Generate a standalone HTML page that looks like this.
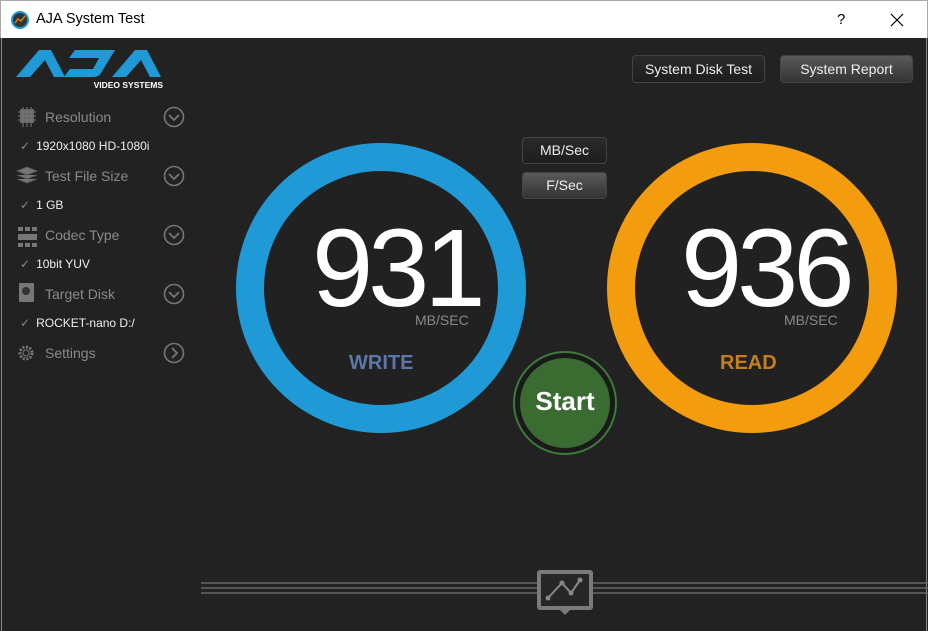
<!DOCTYPE html>
<html><head><meta charset="utf-8"><style>
*{margin:0;padding:0;box-sizing:border-box}
body{width:928px;height:631px;overflow:hidden;background:#222;font-family:"Liberation Sans",sans-serif;position:relative}
.tb{position:absolute;left:0;top:0;width:928px;height:38px;background:#fff;border:1px solid #aaa;border-bottom:none}
.tb .t{position:absolute;left:35px;top:10px;font-size:14.5px;color:#000}
.main{position:absolute;left:1px;top:38px;width:926px;height:593px;background:#222;border-left:1px solid #888;border-right:1px solid #888}
.a{position:absolute}
.side{font-size:14px;color:#8a8a8a}
.sel{font-size:12px;color:#eee}
.sel span{color:#888;margin-right:6px}
.btn{position:absolute;border:1px solid #444;border-radius:4px;color:#eee;font-size:14px;text-align:center;background:linear-gradient(#2a2a2a,#1e1e1e)}
.btn.on{background:linear-gradient(#5a5a5a,#333)}
.num{position:absolute;color:#fff;font-size:110px;letter-spacing:-5px;line-height:1}
.unit{position:absolute;color:#888;font-size:14px}
.lbl{position:absolute;font-weight:bold;font-size:20px}
</style></head><body>
<div class="tb">
<svg class="a" style="left:9px;top:9px" width="20" height="20"><circle cx="10" cy="10" r="9" fill="#1f9ad6"/><circle cx="10" cy="10" r="7" fill="#333"/><path d="M5 13 L8 9 L11 11 L15 6" stroke="#c8861e" stroke-width="1.5" fill="none"/></svg>
<div class="t">AJA System Test</div>
<div class="a" style="left:836px;top:10px;font-size:15px">?</div>
<svg class="a" style="left:889px;top:12px" width="14" height="14"><path d="M1 1L13 13M13 1L1 13" stroke="#000" stroke-width="1.2"/></svg>
</div>
<div class="main"></div>
<svg class="a" style="left:15px;top:47px" width="150" height="45">
<path d="M1 30 L24 3 L36 3 L50 30 L39 30 L30 13 L15 30 Z" fill="#1f9ad6"/>
<path d="M60 3 L100 3 L86 26 Q84 30 78 30 L49 30 L55 22 L78 22 L84 11 L54 11 Z" fill="#1f9ad6"/>
<path d="M97 30 L120 3 L132 3 L146 30 L135 30 L126 13 L111 30 Z" fill="#1f9ad6"/>
<text x="148" y="41" fill="#fff" font-size="8.5" font-weight="bold" text-anchor="end" font-family="Liberation Sans">VIDEO SYSTEMS</text>
</svg>
<div class="a side" style="left:45px;top:109px">Resolution</div>
<div class="a side" style="left:45px;top:168px">Test File Size</div>
<div class="a side" style="left:45px;top:227px">Codec Type</div>
<div class="a side" style="left:45px;top:286px">Target Disk</div>
<div class="a side" style="left:45px;top:345px">Settings</div>
<div class="a sel" style="left:20px;top:139px"><span>✓</span>1920x1080 HD-1080i</div>
<div class="a sel" style="left:20px;top:198px"><span>✓</span>1 GB</div>
<div class="a sel" style="left:20px;top:257px"><span>✓</span>10bit YUV</div>
<div class="a sel" style="left:20px;top:316px"><span>✓</span>ROCKET-nano D:/</div>
<svg class="a" style="left:15px;top:105px" width="180" height="262" fill="none" stroke="#777">
<rect x="5" y="4" width="14" height="14" fill="#666" stroke="none"/><path d="M3 7h18M3 11h18M3 15h18M8 2v20M12 2v20M16 2v20" stroke-width="1"/>
<path d="M2 66l10-4 10 4-10 4z M2 70l10 4 10-4 M2 74l10 4 10-4" fill="#777" stroke="#555"/>
<path d="M3 122h5v4h-5zM10 122h5v4h-5zM17 122h5v4h-5zM3 129h19v6H3zM3 138h5v4h-5zM10 138h5v4h-5zM17 138h5v4h-5z" fill="#777" stroke="none"/>
<rect x="4" y="178" width="15" height="19" rx="1" fill="#777" stroke="none"/><circle cx="11" cy="186" r="4" fill="#333" stroke="none"/>
<circle cx="11" cy="248" r="6" stroke-width="3" stroke-dasharray="2 1.5"/><circle cx="11" cy="248" r="3"/>
<circle cx="159" cy="12" r="9.5" stroke-width="1.6"/><path d="M154 10l5 5 5-5" stroke-width="1.8"/>
<circle cx="159" cy="71" r="9.5" stroke-width="1.6"/><path d="M154 69l5 5 5-5" stroke-width="1.8"/>
<circle cx="159" cy="130" r="9.5" stroke-width="1.6"/><path d="M154 128l5 5 5-5" stroke-width="1.8"/>
<circle cx="159" cy="189" r="9.5" stroke-width="1.6"/><path d="M154 187l5 5 5-5" stroke-width="1.8"/>
<circle cx="159" cy="248" r="9.5" stroke-width="1.6"/><path d="M157 243l5 5-5 5" stroke-width="1.8"/>
</svg>
<div class="btn" style="left:632px;top:55px;width:133px;height:28px;line-height:26px">System Disk Test</div>
<div class="btn on" style="left:780px;top:55px;width:133px;height:28px;line-height:26px">System Report</div>
<div class="btn" style="left:522px;top:137px;width:85px;height:27px;line-height:25px">MB/Sec</div>
<div class="btn on" style="left:522px;top:172px;width:85px;height:27px;line-height:25px">F/Sec</div>
<svg class="a" style="left:0;top:0" width="928" height="631">
<circle cx="381" cy="288" r="131" fill="#212121" stroke="#1f9ad6" stroke-width="28"/>
<circle cx="752" cy="288" r="131" fill="#212121" stroke="#f29c0e" stroke-width="28"/>
<circle cx="565" cy="403" r="51" fill="#1a1a1a" stroke="#3e7a3a" stroke-width="2"/>
<circle cx="565" cy="403" r="45" fill="#3a6b31"/>
<path d="M201 583H537M201 588H537M201 593H537M593 583H928M593 588H928M593 593H928" stroke="#666" stroke-width="1.5"/>
<rect x="537" y="570" width="56" height="40" rx="3" fill="#7a7a7a"/>
<path d="M560 610l5 5 5-5z" fill="#7a7a7a"/>
<rect x="541" y="574" width="48" height="32" fill="#262626"/>
<path d="M548 598L562 583L571 593L580 580" stroke="#888" stroke-width="2" fill="none"/>
<circle cx="548" cy="598" r="2.5" fill="#888"/><circle cx="562" cy="583" r="2.5" fill="#888"/><circle cx="571" cy="593" r="2.5" fill="#888"/><circle cx="580" cy="580" r="2.5" fill="#888"/>
</svg>
<div class="num" style="left:312px;top:214px">931</div>
<div class="num" style="left:681px;top:214px">936</div>
<div class="unit" style="left:415px;top:312px">MB/SEC</div>
<div class="unit" style="left:784px;top:312px">MB/SEC</div>
<div class="lbl" style="left:349px;top:352px;color:#5b78a8">WRITE</div>
<div class="lbl" style="left:720px;top:352px;color:#c47f1c">READ</div>
<div class="a" style="left:520px;top:386px;width:90px;text-align:center;color:#fff;font-weight:bold;font-size:26px">Start</div>
</body></html>
